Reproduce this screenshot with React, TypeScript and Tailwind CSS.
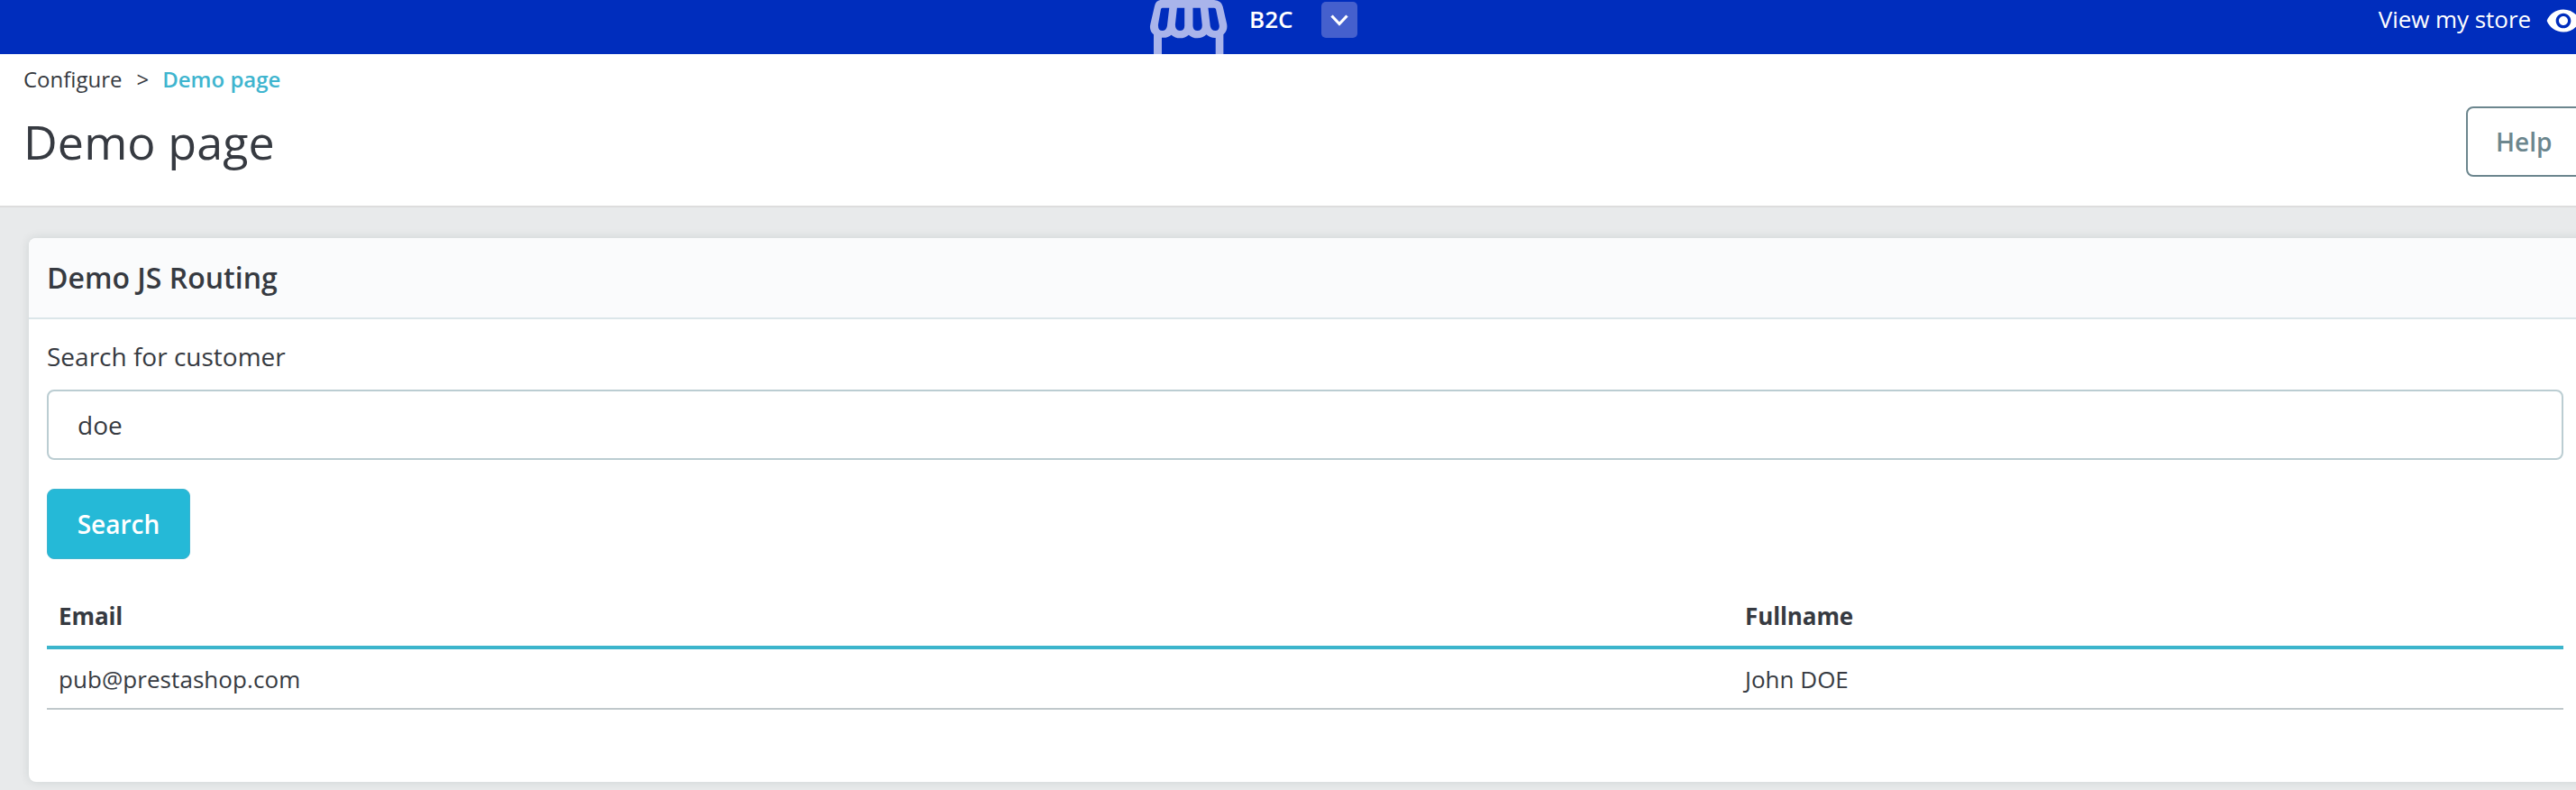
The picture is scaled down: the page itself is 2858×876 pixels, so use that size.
import React from "react";

function StoreIcon() {
  return (
    <svg viewBox="75 0 265 180" className="h-[60px] w-[88px] shrink-0" preserveAspectRatio="none" aria-hidden="true">
      <path
        fill="#a9b4ea"
        fillRule="evenodd"
        d="M112 0 H292 Q317 2 321 22 L334 78 Q339 101 323 115 V180 H297 V126 Q279 127 266 115 Q254 127 236 127 Q219 127 207 116 Q195 127 178 127 Q161 127 149 116 Q137 127 117 125 V180 H90 V115 Q74 102 79 80 L93 20 Q97 2 112 0 Z
        M119 26 Q115 26 114 31 L105 82 Q104 102 119 102 Q132 102 135 86 L142 26 Z
        M168 26 L162 82 Q162 102 177 102 Q193 102 193 86 V26 Z
        M221 26 V86 Q222 102 236 102 Q252 102 252 84 L246 26 Z
        M272 26 L279 86 Q282 102 296 102 Q311 102 309 84 L298 31 Q297 26 292 26 Z"
      />
    </svg>
  );
}

function TopBar() {
  return (
    <header className="flex h-[60px] shrink-0 items-start bg-[#002dbd] text-[26px] leading-[42px] text-white">
      <div className="ml-[1275px]">
        <StoreIcon />
      </div>
      <span className="ml-[23px] w-[80px] font-semibold">B2C</span>
      <button className="mt-[2px] flex size-10 items-center justify-center rounded-[5px] bg-[#4560cd]" aria-label="Select store">
        <svg viewBox="0 0 40 40" className="size-10" fill="none" stroke="#fff" strokeWidth="3.2">
          <path d="M11.5 15.5 L20 24.5 L28.5 15.5" />
        </svg>
      </button>
      <a className="ml-auto pr-[16px] tracking-[-0.06px] whitespace-nowrap">View my store</a>
      <svg viewBox="0 0 24 24" className="mt-[3px] -mr-[6px] size-10 shrink-0" fill="#fff" aria-hidden="true">
        <path d="M12 4.5C7 4.5 2.73 7.61 1 12c1.73 4.39 6 7.5 11 7.5s9.27-3.11 11-7.5c-1.73-4.39-6-7.5-11-7.5zM12 17c-2.76 0-5-2.24-5-5s2.24-5 5-5 5 2.24 5 5-2.24 5-5 5zm0-8c-1.66 0-3 1.34-3 3s1.34 3 3 3 3-1.34 3-3-1.34-3-3-3z" />
      </svg>
    </header>
  );
}

function PageHeader() {
  return (
    <div className="flex h-[170px] shrink-0 justify-between border-b-2 border-[#dddddd] bg-white pl-[26px]">
      <div className="pt-[10px]">
        <nav className="flex text-[24px] leading-9">
          <span>Configure</span>
          <span className="mr-[15px] ml-4">&gt;</span>
          <span className="font-semibold text-[#3fb5cf]">Demo page</span>
        </nav>
        <h1 className="mt-[15px] text-[52px] leading-[72px] tracking-[0.1px]">Demo page</h1>
      </div>
      <button className="mt-[58px] -mr-3 flex h-[78px] w-[134px] items-center rounded-[8px] border-2 border-[#6c868e] pl-[31px] text-[28px] font-semibold text-[#6c868e]">
        Help
      </button>
    </div>
  );
}

function CustomerTable() {
  return (
    <table className="mt-[30px] w-full table-fixed border-collapse text-left text-[26px] leading-[36px]">
      <colgroup>
        <col className="w-[1871px]" />
        <col />
      </colgroup>
      <thead>
        <tr className="h-[68px] border-b-4 border-[#3cb5cc]">
          <th className="p-0 pl-[13px] font-bold tracking-[-0.1px]">Email</th>
          <th className="p-0 pl-[13px] font-bold tracking-[-0.1px]">Fullname</th>
        </tr>
      </thead>
      <tbody>
        <tr className="h-[68px] border-b-2 border-[#c0c8cb]">
          <td className="p-0 pl-[13px] tracking-[0.06px]">pub@prestashop.com</td>
          <td className="p-0 pl-[13px]">John DOE</td>
        </tr>
      </tbody>
    </table>
  );
}

export default function App() {
  return (
    <div className="flex h-[876px] w-[2858px] flex-col overflow-hidden bg-[#e8eaeb] font-['Open_Sans',sans-serif] text-[#363a41]">
      <TopBar />
      <PageHeader />
      <main className="mt-[34px] -mr-5 ml-8 h-[603px] shrink-0 overflow-visible rounded-[8px] bg-white shadow-[0_0_12px_rgba(0,45,50,0.11)]">
        <h2 className="h-[90px] rounded-t-[8px] border-b-2 border-[#dbe6e9] bg-[#fafbfc] pl-5 text-[32px] leading-[88px] font-semibold">
          Demo JS Routing
        </h2>
        <div className="flex flex-col items-start pt-[22px] pr-[34px] pl-5">
          <label htmlFor="customer" className="text-[28px] leading-[38px]">
            Search for customer
          </label>
          <input
            id="customer"
            type="text"
            defaultValue="doe"
            className="mt-[18px] h-[78px] w-full rounded-[8px] border-2 border-[#bbcdd2] bg-white px-8 text-[28px]"
          />
          <button className="mt-8 h-[78px] w-[159px] rounded-[8px] border border-[#3eb3ce] bg-[#25b9d7] text-[28px] font-semibold text-white">
            Search
          </button>
          <CustomerTable />
        </div>
      </main>
    </div>
  );
}
